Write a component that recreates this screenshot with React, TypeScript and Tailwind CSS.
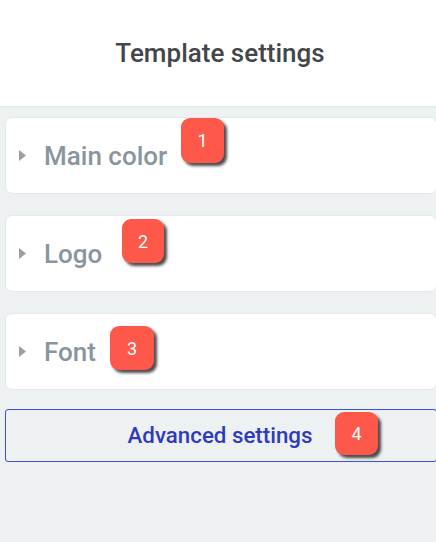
import React from "react";

function Caret() {
  return (
    <svg width="8" height="11" viewBox="0 0 8 11" className="shrink-0">
      <path d="M0 0 L7 5.5 L0 11 Z" fill="#9e9e9e" />
    </svg>
  );
}

function Badge({ n, className }: { n: string; className: string }) {
  return (
    <div
      className={`absolute flex items-center justify-center rounded-[9px] bg-[#fd5849] text-white text-[18px] shadow-[3px_3px_3px_rgba(0,0,0,0.7)] ${className}`}
    >
      {n}
    </div>
  );
}

function Card({ label, children }: { label: string; children?: React.ReactNode }) {
  return (
    <div className="relative h-[77px] bg-white rounded-[7px] border border-[#e3e8ea] flex items-center pl-[13px] gap-[17px]">
      <Caret />
      <span className="text-[26px] font-medium text-[#8a959d] leading-none">{label}</span>
      {children}
    </div>
  );
}

export default function App() {
  return (
    <div
      className="w-[436px] h-[542px] bg-[#eef1f2] overflow-hidden"
      style={{ fontFamily: "Roboto, 'Liberation Sans', sans-serif" }}
    >
      <div className="h-[107px] bg-white border-b border-[#e3e8ea] flex items-center justify-center pl-[4px]">
        <span className="text-[26px] font-medium text-[#444649] leading-none">Template settings</span>
      </div>
      <div className="pl-[5px] mr-[-1px] pt-[10px] flex flex-col gap-[21px]">
        <Card label="Main color">
          <Badge n="1" className="left-[175px] top-[0px] w-[43px] h-[45px]" />
        </Card>
        <Card label="Logo">
          <Badge n="2" className="left-[116px] top-[3px] w-[42px] h-[44px]" />
        </Card>
        <Card label="Font">
          <Badge n="3" className="left-[104px] top-[12px] w-[44px] h-[44px]" />
        </Card>
        <div className="relative mt-[-2px] h-[53px] border border-[#3f4fd6] rounded-[3px] flex items-center justify-center pl-[2px]">
          <span className="text-[22.3px] font-medium text-[#2f3bbd] mr-[4px] leading-none">Advanced settings</span>
          <Badge n="4" className="left-[329px] top-[2px] w-[43px] h-[43px]" />
        </div>
      </div>
    </div>
  );
}
